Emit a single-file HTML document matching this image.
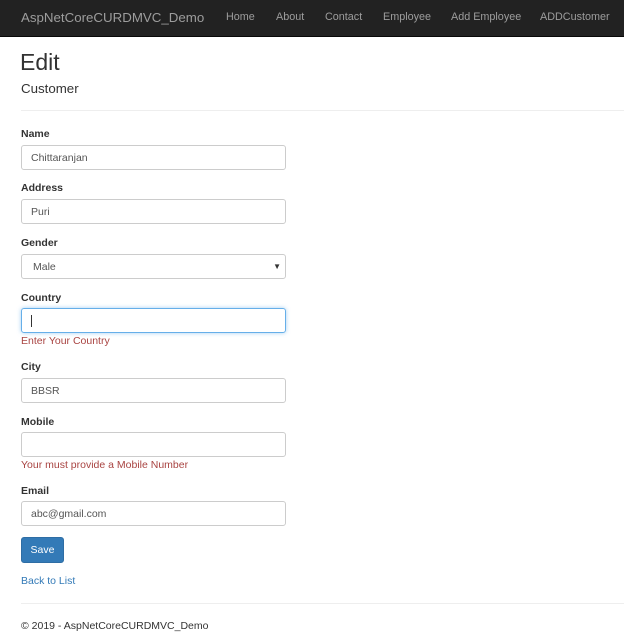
<!DOCTYPE html>
<html><head><style>
body{margin:0;width:624px;height:644px;overflow:hidden;font-family:"Liberation Sans",Arial,sans-serif;color:#333;background:#fff;position:relative}
.a{position:absolute}
.nav{left:0;top:0;width:624px;height:36px;background:#222;border-bottom:1px solid #080808}
.nav span{position:absolute;top:11px;font-size:10.8px;color:#9d9d9d}
.lbl{left:21px;font-size:10.5px;font-weight:bold;color:#333}
.in{left:21px;width:263px;height:23px;border:1px solid #ccc;border-radius:3px;font-size:10.5px;line-height:24px;text-indent:9px;color:#555;box-sizing:content-box}
.err{left:21px;font-size:10.5px;color:#a94442}
hr{position:absolute;left:21px;width:603px;margin:0;border:0;border-top:1px solid #eee}
</style></head><body>
<div class="a nav">
<span style="left:21px;top:10px;font-size:13.3px">AspNetCoreCURDMVC_Demo</span>
<span style="left:226px">Home</span>
<span style="left:276px">About</span>
<span style="left:325px">Contact</span>
<span style="left:383px">Employee</span>
<span style="left:451px">Add Employee</span>
<span style="left:540px">ADDCustomer</span>
</div>
<div class="a" style="left:20px;top:49px;font-size:23px;color:#333">Edit</div>
<div class="a" style="left:21px;top:81px;font-size:13.3px">Customer</div>
<hr style="top:110px">
<div class="a lbl" style="top:128px">Name</div>
<div class="a in" style="top:145px">Chittaranjan</div>
<div class="a lbl" style="top:182px">Address</div>
<div class="a in" style="top:199px">Puri</div>
<div class="a lbl" style="top:237px">Gender</div>
<div class="a in" style="top:254px;text-indent:11px">Male<span style="position:absolute;right:4px;top:0;font-size:8px;color:#333">▼</span></div>
<div class="a lbl" style="top:292px">Country</div>
<div class="a in" style="top:308px;border-color:#66afe9;box-shadow:0 0 4px rgba(102,175,233,.6)"><span style="display:inline-block;width:1px;height:12px;background:#333;vertical-align:middle"></span></div>
<div class="a err" style="top:335px">Enter Your Country</div>
<div class="a lbl" style="top:361px">City</div>
<div class="a in" style="top:378px">BBSR</div>
<div class="a lbl" style="top:416px">Mobile</div>
<div class="a in" style="top:432px"></div>
<div class="a err" style="top:459px">Your must provide a Mobile Number</div>
<div class="a lbl" style="top:485px">Email</div>
<div class="a in" style="top:501px">abc@gmail.com</div>
<div class="a" style="left:21px;top:537px;width:41px;height:24px;background:#337ab7;border:1px solid #2e6da4;border-radius:3px;color:#fff;font-size:10.5px;line-height:25px;text-align:center">Save</div>
<div class="a" style="left:21px;top:575px;font-size:10.5px;color:#337ab7">Back to List</div>
<hr style="top:603px">
<div class="a" style="left:21px;top:620px;font-size:10.5px">© 2019 - AspNetCoreCURDMVC_Demo</div>
</body></html>
